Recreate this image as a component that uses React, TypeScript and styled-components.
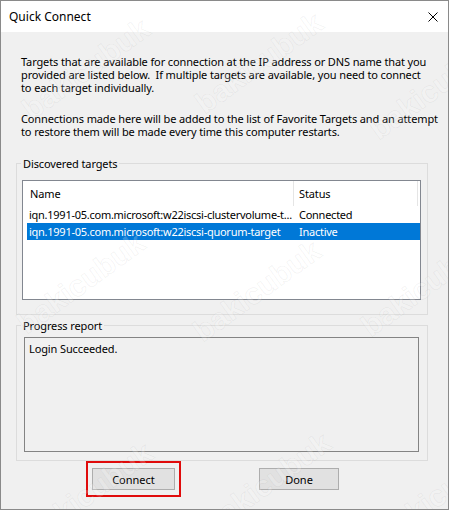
import React from "react";
import styled, { createGlobalStyle } from "styled-components";

const Global = createGlobalStyle`
  html, body { margin: 0; padding: 0; background: #ffffff; }
  * { box-sizing: border-box; }
`;

const UI = `"Noto Sans", "Liberation Sans", sans-serif`;

const Window = styled.div`
  position: relative;
  width: 449px;
  height: 510px;
  border: 1px solid #8a8a8a;
  background: #f0f0f0;
  display: flex;
  flex-direction: column;
  overflow: hidden;
  font-family: ${UI};
  font-size: 11px;
  line-height: 13px;
  letter-spacing: -0.12px;
  color: #000;
`;

const TitleBar = styled.div`
  height: 31px;
  flex: none;
  background: #ffffff;
  display: flex;
  align-items: center;
  justify-content: space-between;
  padding: 0 10px 0 8px;
`;

const Title = styled.span`
  font-size: 12px;
  line-height: 16px;
  letter-spacing: 0;
`;

const CloseIcon = styled.svg`
  width: 10px;
  height: 10px;
  display: block;
`;

const Intro = styled.div`
  padding: 23px 0 0 20px;
  display: flex;
  flex-direction: column;
  gap: 18px;
`;

const Para = styled.p`
  margin: 0;
  white-space: nowrap;
`;

const Group = styled.fieldset<{ $top: number; $pt: number; $pb: number }>`
  margin: ${(p) => p.$top}px 20px 0 15px;
  padding: ${(p) => p.$pt}px 6px ${(p) => p.$pb}px 4px;
  border: 1px solid #dcdcdc;
  min-width: 0;
`;

const Legend = styled.legend`
  padding: 0 2px;
  font-size: 11px;
  line-height: 13px;
`;

const ListView = styled.div`
  margin-left: 1px;
  height: 120px;
  background: #ffffff;
  border: 1px solid #828790;
`;

const Header = styled.div`
  display: grid;
  grid-template-columns: 271px 124px;
  height: 25px;
`;

const HeaderCell = styled.div<{ $pad: number }>`
  display: flex;
  align-items: center;
  padding-left: ${(p) => p.$pad}px;
  border-right: 1px solid #e5e5e5;
`;

const Row = styled.div<{ $selected?: boolean }>`
  display: grid;
  grid-template-columns: 266px 1fr;
  height: 17px;
  align-items: center;
  margin-left: 4px;
  background: ${(p) => (p.$selected ? "#0078d7" : "transparent")};
  color: ${(p) => (p.$selected ? "#ffffff" : "#000000")};
`;

const Cell = styled.span<{ $pad: number }>`
  padding-left: ${(p) => p.$pad}px;
  white-space: nowrap;
  letter-spacing: -0.26px;
`;

const ReportBox = styled.div`
  margin: 0 2px 0 3px;
  height: 115px;
  border: 1px solid #838383;
  background: #f0f0f0;
  padding: 4px 4px;
`;

const ButtonRow = styled.div`
  display: flex;
  align-items: center;
  gap: 78px;
  padding-left: 85px;
`;

const Highlight = styled.div`
  border: 2px solid #e00b0b;
  padding: 5px 4px;
`;

const Button = styled.button<{ $w: number }>`
  width: ${(p) => p.$w}px;
  height: 22px;
  border: 1px solid #adadad;
  background: #e1e1e1;
  font-family: ${UI};
  font-size: 11px;
  line-height: 13px;
  color: #000;
  padding: 0;
  display: block;
`;

const Watermarks = styled.div`
  position: absolute;
  inset: 0;
  pointer-events: none;
  overflow: hidden;
`;

const Mark = styled.span<{ $x: number; $y: number }>`
  position: absolute;
  left: ${(p) => p.$x}px;
  top: ${(p) => p.$y}px;
  transform: translate(-50%, -50%) rotate(-36deg);
  font-family: "Liberation Sans", sans-serif;
  font-weight: bold;
  font-size: 30px;
  line-height: 30px;
  letter-spacing: 0;
  color: rgba(255, 255, 255, 0.2);
  -webkit-text-stroke: 0.7px rgba(120, 120, 120, 0.1);
  white-space: nowrap;
`;

const marks = [
  [85, 68], [258, 62], [432, 88],
  [80, 282], [256, 290], [424, 285],
  [88, 492], [266, 482], [440, 492],
];

export default function App() {
  return (
    <>
      <Global />
      <Window>
        <TitleBar>
          <Title>Quick Connect</Title>
          <CloseIcon viewBox="0 0 10 10">
            <path d="M0.5 0.5 L9.5 9.5 M9.5 0.5 L0.5 9.5" stroke="#000" strokeWidth="1" fill="none" />
          </CloseIcon>
        </TitleBar>
        <Intro>
          <Para>
            Targets that are available for connection at the IP address or DNS name that you
            <br />
            provided are listed below.&nbsp; If multiple targets are available, you need to connect
            <br />
            to each target individually.
          </Para>
          <Para>
            Connections made here will be added to the list of Favorite Targets and an attempt
            <br />
            to restore them will be made every time this computer restarts.
          </Para>
        </Intro>
        <Group $top={19} $pt={10} $pb={14}>
          <Legend>Discovered targets</Legend>
          <ListView>
            <Header>
              <HeaderCell $pad={7}>Name</HeaderCell>
              <HeaderCell $pad={5}>Status</HeaderCell>
            </Header>
            <Row>
              <Cell $pad={2}>iqn.1991-05.com.microsoft:w22iscsi-clustervolume-t...</Cell>
              <Cell $pad={6}>Connected</Cell>
            </Row>
            <Row $selected>
              <Cell $pad={2}>iqn.1991-05.com.microsoft:w22iscsi-quorum-target</Cell>
              <Cell $pad={6}>Inactive</Cell>
            </Row>
          </ListView>
        </Group>
        <Group $top={4} $pt={5} $pb={8}>
          <Legend>Progress report</Legend>
          <ReportBox>Login Succeeded.</ReportBox>
        </Group>
        <ButtonRow>
          <Highlight>
            <Button $w={83}>Connect</Button>
          </Highlight>
          <Button $w={80}>Done</Button>
        </ButtonRow>
        <Watermarks>
          {marks.map(([x, y], i) => (
            <Mark key={i} $x={x} $y={y}>bakicubuk</Mark>
          ))}
        </Watermarks>
      </Window>
    </>
  );
}
